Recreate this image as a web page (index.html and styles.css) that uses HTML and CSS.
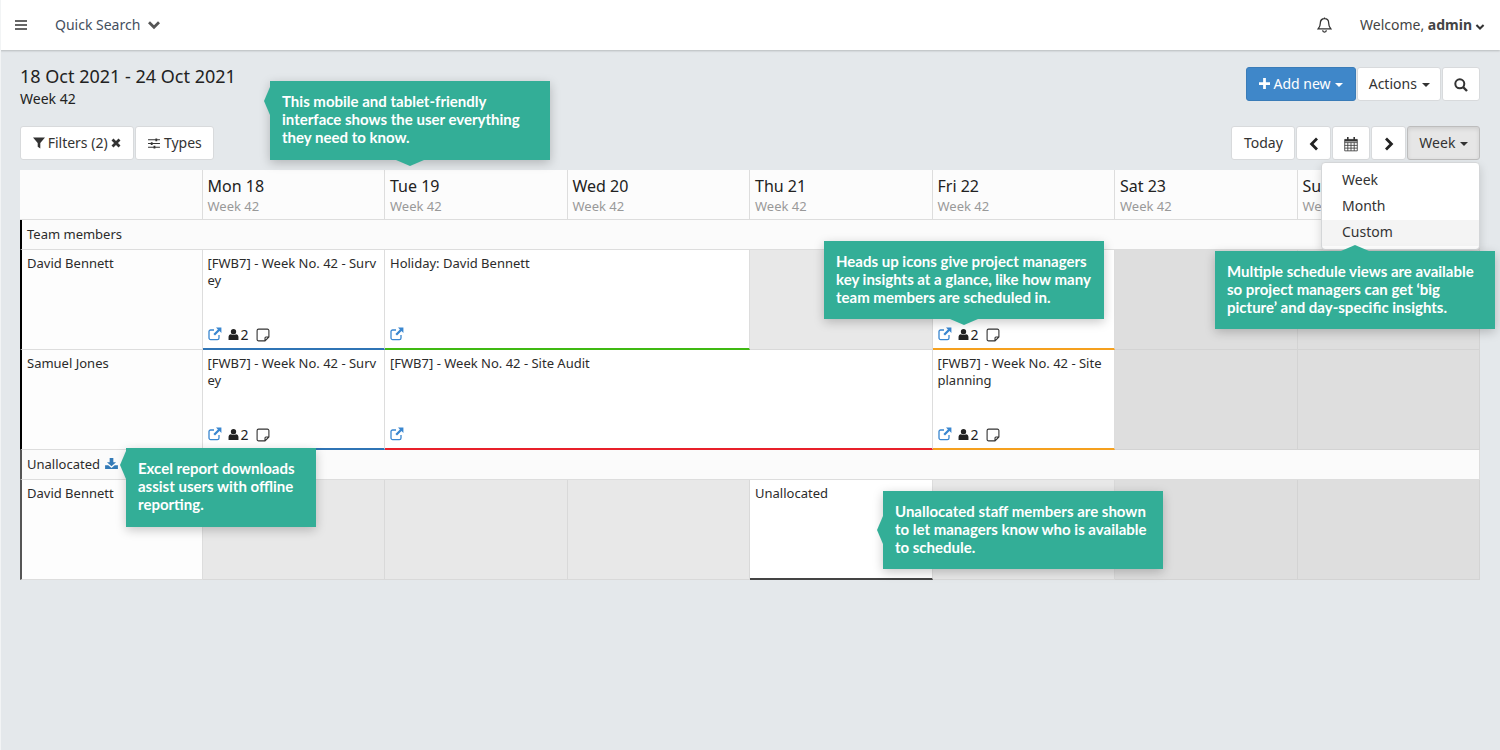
FILE: index.html
```html
<!DOCTYPE html>
<html lang="en">
<head>
    <meta charset="UTF-8">
    <meta name="viewport" content="width=device-width, initial-scale=1.0">
    <title>Schedule</title>
    <link rel="stylesheet" href="styles.css">
</head>
<body>
    <svg class="icon-defs" xmlns="http://www.w3.org/2000/svg">
        <symbol id="i-link" viewBox="0 0 14 14"><path d="M11 8v3a1.6 1.6 0 0 1-1.6 1.6H2.6A1.6 1.6 0 0 1 1 11V4.6A1.6 1.6 0 0 1 2.6 3H6" fill="none" stroke="currentColor" stroke-width="1.3"/><path d="M8 0.6h5.4V6l-1.9-1.9L7 8.6 5.4 7l4.5-4.500z" fill="currentColor"/></symbol>
        <symbol id="i-user" viewBox="0 0 12 12"><circle cx="6" cy="3" r="2.9" fill="currentColor"/><path d="M0.6 11.9V8.6C0.6 6.9 1.8 5.7 3.2 5.6 4 6.2 5 6.5 6 6.5s2-.3 2.8-.9c1.4.1 2.6 1.3 2.6 3v3.3z" fill="currentColor"/></symbol>
        <symbol id="i-note" viewBox="0 0 14 14"><path d="M9 12.900H2.600a1.500 1.500 0 0 1-1.500-1.500V2.600a1.500 1.500 0 0 1 1.500-1.500h8.800a1.500 1.500 0 0 1 1.500 1.500V9zM12.600 9H10a1 1 0 0 0-1 1v2.600" fill="none" stroke="currentColor" stroke-width="1.100"/></symbol>
        <symbol id="i-chevron" viewBox="0 0 14 10"><path d="M2 2.200l5 5 5-5" fill="none" stroke="currentColor" stroke-width="2.800"/></symbol>
        <symbol id="i-left" viewBox="0 0 10 14"><path d="M8 1.600L2.600 7 8 12.400" fill="none" stroke="currentColor" stroke-width="2.800"/></symbol>
        <symbol id="i-right" viewBox="0 0 10 14"><path d="M2 1.600L7.400 7 2 12.400" fill="none" stroke="currentColor" stroke-width="2.800"/></symbol>
    </svg>

    <header class="top-bar">
        <svg class="bars-icon" viewBox="0 0 12 10"><path d="M0 0h12v2H0zM0 4h12v2H0zM0 8h12v2H0z" fill="currentColor"/></svg>
        <span class="quick-search">Quick Search</span>
        <svg class="chevron-lg"><use href="#i-chevron"/></svg>
        <svg class="bell-icon" viewBox="0 0 14 15"><path d="M7 1.600c2.500 0 3.900 1.900 3.900 4 0 3.300 1 4.300 2.100 5.600H1c1.100-1.300 2.100-2.300 2.100-5.600 0-2.100 1.400-4 3.900-4zM5.300 12.400a1.700 1.700 0 0 0 3.400 0M7 .5v1.100" fill="none" stroke="currentColor" stroke-width="1.200"/></svg>
        <span class="welcome">Welcome, <b>admin</b></span>
        <svg class="chevron-sm"><use href="#i-chevron"/></svg>
    </header>

    <main class="page">
        <div class="title-row">
            <div>
                <h1>18 Oct 2021 - 24 Oct 2021</h1>
                <p class="subtitle">Week 42</p>
            </div>
            <div class="btn-group">
                <button class="btn btn-primary"><svg class="plus-icon" viewBox="0 0 12 12"><path d="M4.500 0h3v4.500H12v3H7.500V12h-3V7.500H0v-3h4.500z" fill="currentColor"/></svg> Add new <span class="caret"></span></button>
                <button class="btn btn-actions">Actions <span class="caret"></span></button>
                <button class="btn btn-icon"><svg class="search-icon" viewBox="0 0 14 14"><circle cx="5.800" cy="5.800" r="4.500" fill="none" stroke="currentColor" stroke-width="2"/><path d="M9 9l4 4" stroke="currentColor" stroke-width="2.400"/></svg></button>
            </div>
        </div>

        <div class="tool-row">
            <div class="btn-group">
                <button class="btn btn-wide"><svg class="filter-icon" viewBox="0 0 12 12"><path d="M0 .5h12L7.300 6v5.500L4.700 9.800V6z" fill="currentColor"/></svg> Filters (2) <svg class="x-icon" viewBox="0 0 10 10"><path d="M1.500 1.500l7 7M8.500 1.500l-7 7" stroke="currentColor" stroke-width="2.800"/></svg></button>
                <button class="btn btn-wide"><svg class="sliders-icon" viewBox="0 0 13 12"><path d="M0 2h13M0 6h13M0 10h13" stroke="currentColor" stroke-width="1.100"/><path d="M8 .5h2v3H8zM3 4.500h2v3H3zM6 8.500h2v3H6z" fill="currentColor"/></svg> Types</button>
            </div>
            <div class="btn-group">
                <button class="btn btn-today">Today</button>
                <button class="btn btn-nav"><svg class="nav-icon"><use href="#i-left"/></svg></button>
                <button class="btn btn-cal"><svg class="cal-icon" viewBox="0 0 14 14"><path d="M1.500 3h11v10h-11zM1.500 5.800h11M1.500 8.200h11M1.500 10.600h11M4.200 5.800V13M7 5.800V13M9.800 5.800V13" fill="none" stroke="currentColor" stroke-width=".7"/><path d="M3.500 .8h1.400v3H3.500zM9.100 .8h1.400v3H9.100zM1.500 3h11v1.800h-11z" fill="currentColor"/></svg></button>
                <button class="btn btn-nav"><svg class="nav-icon"><use href="#i-right"/></svg></button>
                <button class="btn btn-active">Week <span class="caret"></span></button>
            </div>
        </div>

        <div class="schedule">
            <div class="cell head"></div>
            <div class="cell head"><span class="day">Mon 18</span><span class="wk">Week 42</span></div>
            <div class="cell head"><span class="day">Tue 19</span><span class="wk">Week 42</span></div>
            <div class="cell head"><span class="day">Wed 20</span><span class="wk">Week 42</span></div>
            <div class="cell head"><span class="day">Thu 21</span><span class="wk">Week 42</span></div>
            <div class="cell head"><span class="day">Fri 22</span><span class="wk">Week 42</span></div>
            <div class="cell head"><span class="day">Sat 23</span><span class="wk">Week 42</span></div>
            <div class="cell head"><span class="day">Sun 24</span><span class="wk">Week 42</span></div>

            <div class="cell section">Team members</div>

            <div class="cell name">David Bennett</div>
            <div class="cell event ev-blue">
                <span class="ev-text">[FWB7] - Week No. 42 - Survey</span>
                <div class="ev-icons">
                    <svg class="ic-link"><use href="#i-link"/></svg>
                    <svg class="ic-user"><use href="#i-user"/></svg><span class="count">2</span>
                    <svg class="ic-note"><use href="#i-note"/></svg>
                </div>
            </div>
            <div class="cell event ev-green span-2">
                <span class="ev-text">Holiday: David Bennett</span>
                <div class="ev-icons"><svg class="ic-link"><use href="#i-link"/></svg></div>
            </div>
            <div class="cell off"></div>
            <div class="cell event ev-orange">
                <span class="ev-text"></span>
                <div class="ev-icons">
                    <svg class="ic-link"><use href="#i-link"/></svg>
                    <svg class="ic-user"><use href="#i-user"/></svg><span class="count">2</span>
                    <svg class="ic-note"><use href="#i-note"/></svg>
                </div>
            </div>
            <div class="cell weekend"></div>
            <div class="cell weekend"></div>

            <div class="cell name">Samuel Jones</div>
            <div class="cell event ev-blue">
                <span class="ev-text">[FWB7] - Week No. 42 - Survey</span>
                <div class="ev-icons">
                    <svg class="ic-link"><use href="#i-link"/></svg>
                    <svg class="ic-user"><use href="#i-user"/></svg><span class="count">2</span>
                    <svg class="ic-note"><use href="#i-note"/></svg>
                </div>
            </div>
            <div class="cell event ev-red span-3">
                <span class="ev-text">[FWB7] - Week No. 42 - Site Audit</span>
                <div class="ev-icons"><svg class="ic-link"><use href="#i-link"/></svg></div>
            </div>
            <div class="cell event ev-orange">
                <span class="ev-text">[FWB7] - Week No. 42 - Site planning</span>
                <div class="ev-icons">
                    <svg class="ic-link"><use href="#i-link"/></svg>
                    <svg class="ic-user"><use href="#i-user"/></svg><span class="count">2</span>
                    <svg class="ic-note"><use href="#i-note"/></svg>
                </div>
            </div>
            <div class="cell weekend"></div>
            <div class="cell weekend"></div>

            <div class="cell section section-plain">Unallocated <svg class="download-icon" viewBox="0 0 14 12"><path d="M5 0h4v4.500h3L7 9 2 4.500h3z" fill="currentColor"/><path d="M0 8h3.500L7 11l3.500-3H14v4H0z" fill="currentColor"/></svg></div>

            <div class="cell name name-grey">David Bennett</div>
            <div class="cell off"></div>
            <div class="cell off"></div>
            <div class="cell off"></div>
            <div class="cell event ev-dark"><span class="ev-text">Unallocated</span></div>
            <div class="cell off"></div>
            <div class="cell weekend"></div>
            <div class="cell weekend"></div>
        </div>
    </main>

    <ul class="view-menu">
        <li>Week</li>
        <li>Month</li>
        <li class="hover">Custom</li>
    </ul>

    <div class="tip tip-mobile arrow-left arrow-bottom">This mobile and tablet-friendly<br>interface shows the user everything<br>they need to know.</div>
    <div class="tip tip-icons arrow-bottom">Heads up icons give project managers<br>key insights at a glance, like how many<br>team members are scheduled in.</div>
    <div class="tip tip-views arrow-top">Multiple schedule views are available<br>so project managers can get ‘big<br>picture’ and day-specific insights.</div>
    <div class="tip tip-excel arrow-left">Excel report downloads<br>assist users with offline<br>reporting.</div>
    <div class="tip tip-staff arrow-left">Unallocated staff members are shown<br>to let managers know who is available<br>to schedule.</div>
</body>
</html>
```

FILE: styles.css
```css
* {
    box-sizing: border-box;
}

body {
    margin: 0;
    min-height: 750px;
    background: #e4e8eb;
    border-left: 1px solid #f2f4f5;
    font-family: "Noto Sans", sans-serif;
    font-size: 13px;
    color: #2b2b2b;
    position: relative;
    overflow: hidden;
}

.icon-defs {
    display: none;
}

/* top bar */
.top-bar {
    height: 50px;
    margin-left: -1px;
    padding-left: 15px;
    background: #fff;
    box-shadow: 0 1px 2px rgba(0,0,0,0.2);
    display: flex;
    align-items: center;
    color: #444f5e;
}

.bars-icon {
    width: 12px;
    height: 10px;
    color: #666;
}

.quick-search {
    margin-left: 28px;
    margin-bottom: 2px;
    font-size: 14px;
}

.chevron-lg {
    width: 14px;
    height: 10px;
    margin-left: 7px;
    color: #555;
}

.bell-icon {
    width: 15px;
    height: 16px;
    margin-left: auto;
    color: #333;
}

.welcome {
    margin-left: 28px;
    margin-bottom: 2px;
    font-size: 14px;
    color: #444;
}

.chevron-sm {
    width: 10px;
    height: 8px;
    margin-left: 3px;
    margin-right: 15px;
    margin-top: 3px;
    color: #333;
}

/* page */
.page {
    padding: 17px 20px 0 19px;
}

.title-row,
.tool-row {
    display: flex;
    justify-content: space-between;
}

.title-row {
    height: 59px;
}

h1 {
    margin: -2px 0 0;
    font-size: 18px;
    line-height: 22px;
    font-weight: 400;
    color: #222;
}

.subtitle {
    margin: 2px 0 0;
    font-size: 14px;
    line-height: 20px;
    color: #222;
}

.btn-group {
    display: flex;
    gap: 1px;
}

.btn {
    height: 34px;
    padding: 0 11px 2px;
    background: #fff;
    border: 1px solid #d8dadc;
    border-radius: 3px;
    font: 14px "Noto Sans", sans-serif;
    color: #333;
}

.btn-wide {
    padding: 0 12px 2px;
}

.btn-wide + .btn-wide {
    padding-right: 11px;
}

.btn-today {
    padding: 0 11.5px 2px;
}

.btn-actions {
    padding: 0 10.5px 2px;
}

.btn-primary {
    padding: 0 12px 2px;
    background: #3f87c9;
    border-color: #3a7cb8;
    color: #fff;
}

.btn-icon {
    width: 38px;
    padding: 0;
}

.btn-nav {
    width: 35px;
    padding: 0;
}

.btn-cal {
    width: 38px;
    padding: 0;
}

.btn-active {
    background: #e6e6e6;
    border-color: #bdbdbd;
    box-shadow: inset 0 2px 4px rgba(0,0,0,0.1);
}

.caret {
    display: inline-block;
    margin-left: 1px;
    vertical-align: middle;
    border-top: 4px solid currentColor;
    border-left: 4px solid transparent;
    border-right: 4px solid transparent;
}

.plus-icon {
    width: 11px;
    height: 11px;
}

.search-icon {
    width: 14px;
    height: 14px;
    vertical-align: -2px;
}

.filter-icon {
    width: 12px;
    height: 12px;
    margin-right: -1px;
    vertical-align: -1px;
}

.x-icon {
    width: 10px;
    height: 10px;
}

.sliders-icon {
    width: 12px;
    height: 11px;
    vertical-align: -1px;
}

.nav-icon {
    width: 10px;
    height: 14px;
    vertical-align: -2px;
    color: #222;
}

.cal-icon {
    width: 16px;
    height: 16px;
    vertical-align: -3px;
    color: #333;
}

/* schedule grid */
.schedule {
    margin-top: 10px;
    display: grid;
    grid-template-columns: repeat(8, 1fr);
    grid-template-rows: 50px 30px 100px 100px 30px 100px;
}

.cell {
    border-right: 1px solid #dddddd;
    border-bottom: 1px solid #dddddd;
    min-width: 0;
}

.head {
    background: #fcfcfc;
    padding: 5px 5px 0;
}

.day {
    display: block;
    font-size: 16px;
    line-height: 22px;
    color: #222;
}

.wk {
    display: block;
    font-size: 13px;
    line-height: 18px;
    color: #999;
}

.section {
    grid-column: span 8;
    background: #fbfbfb;
    border-left: 2px solid #000;
    padding-left: 5px;
    line-height: 29px;
}

.section-plain {
    border-left-color: #555;
}

.download-icon {
    width: 13px;
    height: 11px;
    margin-left: 2px;
    color: #337ab7;
}

.name {
    background: #fdfdfd;
    border-left: 2px solid #000;
    padding: 4px 5px;
    line-height: 18px;
}

.name-grey {
    border-left-color: #555;
}

.off {
    background: #e8e8e8;
    border-color: #d9d9d9;
}

.weekend {
    background: #dedede;
    border-color: #d3d3d3;
}

.event {
    background: #fff;
    padding: 5px 5px 6px;
    display: flex;
    flex-direction: column;
    line-height: 17px;
    border-bottom-width: 2px;
    word-break: break-all;
}

.span-2 {
    grid-column: span 2;
}

.span-3 {
    grid-column: span 3;
}

.ev-blue { border-bottom-color: #2f74b5; }
.ev-green { border-bottom-color: #3fb912; }
.ev-red { border-bottom-color: #e8202a; }
.ev-orange { border-bottom-color: #f5a01e; }
.ev-dark { border-bottom-color: #444; }

.ev-icons {
    margin-top: auto;
    height: 16px;
    display: flex;
    align-items: center;
    font-size: 14px;
    color: #222;
}

.ic-link {
    width: 14px;
    height: 14px;
    color: #3a87d0;
}

.ic-user {
    width: 11px;
    height: 13px;
    margin-left: 6px;
    margin-top: 1px;
}

.count {
    margin-left: 2px;
}

.ic-note {
    width: 14px;
    height: 14px;
    margin-left: 7px;
    margin-top: 1px;
    color: #333;
}

/* week dropdown */
.view-menu {
    position: absolute;
    left: 1320px;
    top: 162px;
    width: 159px;
    height: 88px;
    margin: 0;
    padding: 5px 0;
    list-style: none;
    background: #fff;
    border: 1px solid #d4d6d8;
    border-radius: 4px;
    box-shadow: 0 4px 10px rgba(0,0,0,0.15);
    font-size: 14px;
    color: #333;
}

.view-menu li {
    height: 26px;
    line-height: 24px;
    padding-left: 20px;
}

.view-menu .hover {
    background: #f4f4f4;
}

/* callouts */
.tip {
    position: absolute;
    padding: 11px 12px;
    background: #33ae97;
    box-shadow: 0 3px 10px rgba(0,0,0,0.22);
    color: #fff;
    font-family: Lato, sans-serif;
    font-size: 15px;
    font-weight: 700;
    line-height: 18px;
    white-space: nowrap;
}

.arrow-left::before,
.arrow-bottom::after,
.arrow-top::after {
    content: "";
    position: absolute;
    background: #33ae97;
}

.arrow-left::before {
    left: -6px;
    top: 6px;
    width: 6px;
    height: 28px;
    clip-path: polygon(100% 0, 0 50%, 100% 100%);
}

.arrow-bottom::after {
    left: 126px;
    bottom: -6px;
    width: 28px;
    height: 6px;
    clip-path: polygon(0 0, 100% 0, 50% 100%);
}

.arrow-top::after {
    left: 126px;
    top: -6px;
    width: 28px;
    height: 6px;
    clip-path: polygon(0 100%, 100% 100%, 50% 0);
}

.tip-mobile {
    left: 269px;
    top: 81px;
    width: 280px;
    height: 79px;
}

.tip-icons {
    left: 823px;
    top: 241px;
    width: 280px;
    height: 78px;
}

.tip-views {
    left: 1214px;
    top: 251px;
    width: 280px;
    height: 78px;
}

.tip-excel {
    left: 125px;
    top: 448px;
    width: 190px;
    height: 79px;
}

.tip-excel::before {
    top: 3px;
}

.tip-staff {
    left: 882px;
    top: 491px;
    width: 280px;
    height: 78px;
}

.tip-staff::before {
    top: 25px;
}
```
